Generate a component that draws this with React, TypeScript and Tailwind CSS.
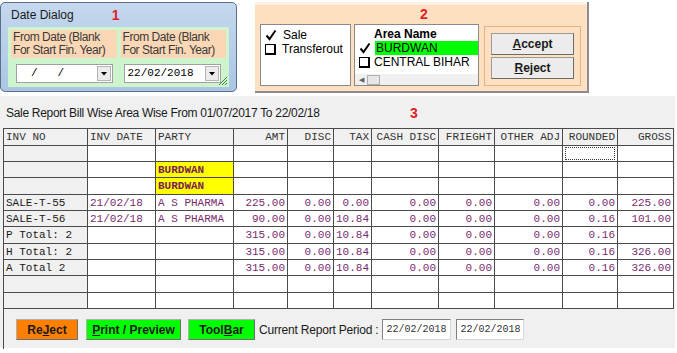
import React from "react";

interface Row {
  inv: string;
  date?: string;
  party?: string;
  area?: boolean;
  amt?: string;
  disc?: string;
  tax?: string;
  cash?: string;
  fr?: string;
  adj?: string;
  rnd?: string;
  gross?: string;
  focus?: boolean;
}

const cols = [
  { key: "inv", label: "INV NO", w: 84, left: true },
  { key: "date", label: "INV DATE", w: 68, left: true },
  { key: "party", label: "PARTY", w: 78, left: true },
  { key: "amt", label: "AMT", w: 54 },
  { key: "disc", label: "DISC", w: 46 },
  { key: "tax", label: "TAX", w: 38 },
  { key: "cash", label: "CASH DISC", w: 67 },
  { key: "fr", label: "FRIEGHT", w: 56 },
  { key: "adj", label: "OTHER ADJ", w: 68 },
  { key: "rnd", label: "ROUNDED", w: 55 },
  { key: "gross", label: "GROSS", w: 56 },
];

const rows: Row[] = [
  { inv: "", focus: true },
  { inv: "", party: "BURDWAN", area: true },
  { inv: "", party: "BURDWAN", area: true },
  { inv: "SALE-T-55", date: "21/02/18", party: "A S PHARMA", amt: "225.00", disc: "0.00", tax: "0.00", cash: "0.00", fr: "0.00", adj: "0.00", rnd: "0.00", gross: "225.00" },
  { inv: "SALE-T-56", date: "21/02/18", party: "A S PHARMA", amt: "90.00", disc: "0.00", tax: "10.84", cash: "0.00", fr: "0.00", adj: "0.00", rnd: "0.16", gross: "101.00" },
  { inv: "P Total: 2", amt: "315.00", disc: "0.00", tax: "10.84", cash: "0.00", fr: "0.00", adj: "0.00", rnd: "0.16" },
  { inv: "H Total: 2", amt: "315.00", disc: "0.00", tax: "10.84", cash: "0.00", fr: "0.00", adj: "0.00", rnd: "0.16", gross: "326.00" },
  { inv: "A Total 2", amt: "315.00", disc: "0.00", tax: "10.84", cash: "0.00", fr: "0.00", adj: "0.00", rnd: "0.16", gross: "326.00" },
  { inv: "" },
  { inv: "" },
];

function Combo({ value, mono }: { value: string; mono?: boolean }) {
  return (
    <div className="flex h-[19px] w-[97px] items-center border border-[#a0a0a0] bg-white">
      <span
        className={`flex-1 font-['Liberation_Mono',monospace] text-[11px] leading-none whitespace-pre text-black ${
          mono ? "pl-[3px]" : "pl-[14px]"
        }`}
      >
        {value}
      </span>
      <span className="mr-[1px] flex h-[15px] w-[14px] items-center justify-center border border-[#b5b5b5] bg-[#ececec]">
        <svg width="6" height="4" viewBox="0 0 6 4">
          <path d="M0 0h6L3 3.5z" fill="#000" />
        </svg>
      </span>
    </div>
  );
}

function Check({ checked }: { checked: boolean }) {
  if (checked) {
    return (
      <svg width="12" height="12" viewBox="0 0 12 12" className="shrink-0">
        <path d="M1.5 6.5 L4.5 10 L10.5 1.5" stroke="#000" strokeWidth="2" fill="none" />
      </svg>
    );
  }
  return (
    <span className="box-border h-[11px] w-[11px] shrink-0 border border-black border-b-[2px] border-r-[2px] bg-white" />
  );
}

function DateLabel() {
  return (
    <div className="bg-[#fbd7b5] px-[2px] pt-[1px] pb-[1px] text-[12px] leading-[13px] tracking-[-0.45px] whitespace-nowrap text-[#3a3a3a]">
      From Date (Blank
      <br />
      For Start Fin. Year)
    </div>
  );
}

// row heights chosen so the grid spans the same 180px as the reference
const rowH = ["h-[16px]", "h-[16px]", "h-[17px]", "h-[16px]", "h-[16px]", "h-[17px]", "h-[16px]", "h-[16px]", "h-[17px]", "h-[16px]"];

export default function App() {
  return (
    <div className="relative h-[353px] w-[677px] overflow-hidden bg-white font-['Liberation_Sans',Arial,sans-serif]">
      {/* top row */}
      <div className="flex h-[96px] items-start pt-[2px]">
        {/* Date dialog window */}
        <div className="box-border h-[90px] w-[237px] rounded-[5px] border border-[#5c6f86] bg-gradient-to-b from-[#c4d8ee] to-[#aac6e4] px-[7px]">
          <div className="flex h-[24px] items-center pl-[3px]">
            <span className="text-[12px] text-[#1a1a1a]">Date Dialog</span>
            <span className="ml-[38px] text-[14px] font-bold text-[#e0202a]">1</span>
          </div>
          <div className="relative box-border flex h-[60px] w-[221px] gap-[4px] bg-[#cdf4cd] px-[3px] pt-[3px]">
            <div className="flex w-[106px] flex-col">
              <DateLabel />
              <div className="mt-[6px] pl-[5px]">
                <Combo value="/   /" />
              </div>
            </div>
            <div className="flex w-[106px] flex-col">
              <DateLabel />
              <div className="mt-[6px] pl-[3px]">
                <Combo value="22/02/2018" mono />
              </div>
            </div>
            <svg width="10" height="10" viewBox="0 0 10 10" className="absolute right-[1px] bottom-[1px]">
              <path d="M9 1 L1 9 M9 4 L4 9 M9 7 L7 9" stroke="#3c8a3c" strokeWidth="1" />
            </svg>
          </div>
        </div>

        {/* Filter panel */}
        <div className="ml-[18px] box-border h-[91px] w-[334px] border-r-[2px] border-b-[2px] border-[#8c8c8c] bg-[#fde0c2]">
          <div className="h-[3px] bg-[#fdf1e4]" />
          <div className="flex h-[19px] items-center justify-center pl-[6px]">
            <span className="text-[14px] font-bold text-[#e0202a]">2</span>
          </div>
          <div className="flex gap-[3px] pl-[5px]">
            <div className="box-border h-[62px] w-[91px] border border-[#8a8a8a] bg-white px-[4px] pt-[3px] text-[12px] leading-[14px] text-black">
              <div className="flex items-center gap-[6px]">
                <Check checked />
                <span>Sale</span>
              </div>
              <div className="flex items-center gap-[6px]">
                <Check checked={false} />
                <span>Transferout</span>
              </div>
            </div>
            <div className="box-border flex h-[62px] w-[125px] flex-col border border-[#8a8a8a] bg-white text-[12px] leading-[14px] text-black">
              <div className="pt-[2px] pl-[19px] font-bold">Area Name</div>
              <div className="flex items-center gap-[4px] pl-[4px]">
                <Check checked />
                <span className="flex-1 bg-[#00ff00] pl-[1px]">BURDWAN</span>
              </div>
              <div className="flex items-center gap-[4px] pl-[4px]">
                <Check checked={false} />
                <span>CENTRAL BIHAR</span>
              </div>
              <div className="mt-auto flex h-[11px] items-center bg-[#f0f0f0]">
                <span className="w-[12px] text-center text-[7px] text-[#606060]">◀</span>
                <span className="h-[10px] w-[13px] border border-[#b0b0b0] bg-[#e6e6e6]" />
              </div>
            </div>
            <div className="ml-[2px] mt-[2px] box-border flex h-[60px] w-[97px] flex-col items-center gap-[2px] border border-[#e8b27c] pt-[6px]">
              <button className="h-[22px] w-[83px] border border-[#9a9a9a] border-r-[#6a6a6a] border-b-[#6a6a6a] bg-[#ececec] text-[12px] font-bold text-[#1a1a1a]">
                <span className="underline">A</span>ccept
              </button>
              <button className="h-[22px] w-[83px] border border-[#9a9a9a] border-r-[#6a6a6a] border-b-[#6a6a6a] bg-[#ececec] text-[12px] font-bold text-[#1a1a1a]">
                <span className="underline">R</span>eject
              </button>
            </div>
          </div>
        </div>
      </div>

      {/* Report section */}
      <div className="h-[252px] w-[675px] bg-[#f0f0f0]">
        <div className="flex h-[32px] items-center pl-[6px] pt-[2px]">
          <span className="w-[404px] text-[12px] tracking-[-0.3px] text-[#1a1a1a]">
            Sale Report Bill Wise Area Wise From 01/07/2017 To 22/02/18
          </span>
          <span className="text-[14px] font-bold text-[#e0202a]">3</span>
        </div>
        <div className="pl-[3px]">
          <table className="table-fixed border-collapse font-['Liberation_Mono',monospace] text-[11px]">
            <colgroup>
              {cols.map((c) => (
                <col key={c.key} style={{ width: c.w }} />
              ))}
            </colgroup>
            <thead>
              <tr className="h-[17px] bg-[#f0f0f0]">
                {cols.map((c) => (
                  <th
                    key={c.key}
                    className={`border border-[#4a4a4a] px-[2px] py-0 font-normal leading-[14px] whitespace-nowrap text-[#333] ${
                      c.left ? "text-left" : "text-right"
                    }`}
                  >
                    {c.label}
                  </th>
                ))}
              </tr>
            </thead>
            <tbody>
              {rows.map((r, i) => (
                <tr key={i} className={rowH[i]}>
                  {cols.map((c, j) => {
                    const v = (r as unknown as Record<string, string | undefined>)[c.key] ?? "";
                    let cls = "border border-[#4a4a4a] px-[2px] py-0 leading-[14px] whitespace-nowrap ";
                    cls += c.left ? "text-left " : "text-right ";
                    if (j === 0) cls += "bg-[#f0f0f0] text-[#1a1a1a] ";
                    else if (r.area && c.key === "party") cls += "bg-[#ffff00] font-bold text-[#7a1f55] ";
                    else cls += "bg-white text-[#7a2a6e] ";
                    return (
                      <td key={c.key} className={cls}>
                        {r.focus && c.key === "rnd" ? (
                          <div className="h-[13px] border border-dotted border-[#333]" />
                        ) : (
                          v
                        )}
                      </td>
                    );
                  })}
                </tr>
              ))}
            </tbody>
          </table>
        </div>
        <div className="ml-[3px] flex h-[40px] items-center border-l border-[#4a4a4a] pl-[12px] pt-[1px] text-[12px]">
          <button className="h-[21px] w-[62px] border border-[#b0b0b0] border-r-[#707070] border-b-[#707070] bg-[#ff8000] font-bold text-[#1a1a1a]">
            Re<span className="underline">J</span>ect
          </button>
          <button className="ml-[8px] h-[21px] w-[95px] border border-[#b0b0b0] border-r-[#707070] border-b-[#707070] bg-[#00ff00] font-bold text-[#1a1a1a]">
            <span className="underline">P</span>rint / Preview
          </button>
          <button className="ml-[7px] h-[21px] w-[67px] border border-[#b0b0b0] border-r-[#707070] border-b-[#707070] bg-[#00ff00] font-bold text-[#1a1a1a]">
            Tool<span className="underline">B</span>ar
          </button>
          <span className="ml-[4px] tracking-[-0.2px] text-[#1a1a1a]">Current Report Period :</span>
          <span className="ml-[4px] box-border flex h-[21px] w-[69px] items-center border border-[#d8d8d8] border-t-[#808080] border-l-[#808080] bg-white pl-[3px] font-['Liberation_Mono',monospace] text-[10px] text-[#333]">
            22/02/2018
          </span>
          <span className="ml-[5px] box-border flex h-[21px] w-[68px] items-center border border-[#d8d8d8] border-t-[#808080] border-l-[#808080] bg-white pl-[3px] font-['Liberation_Mono',monospace] text-[10px] text-[#333]">
            22/02/2018
          </span>
        </div>
      </div>
    </div>
  );
}
